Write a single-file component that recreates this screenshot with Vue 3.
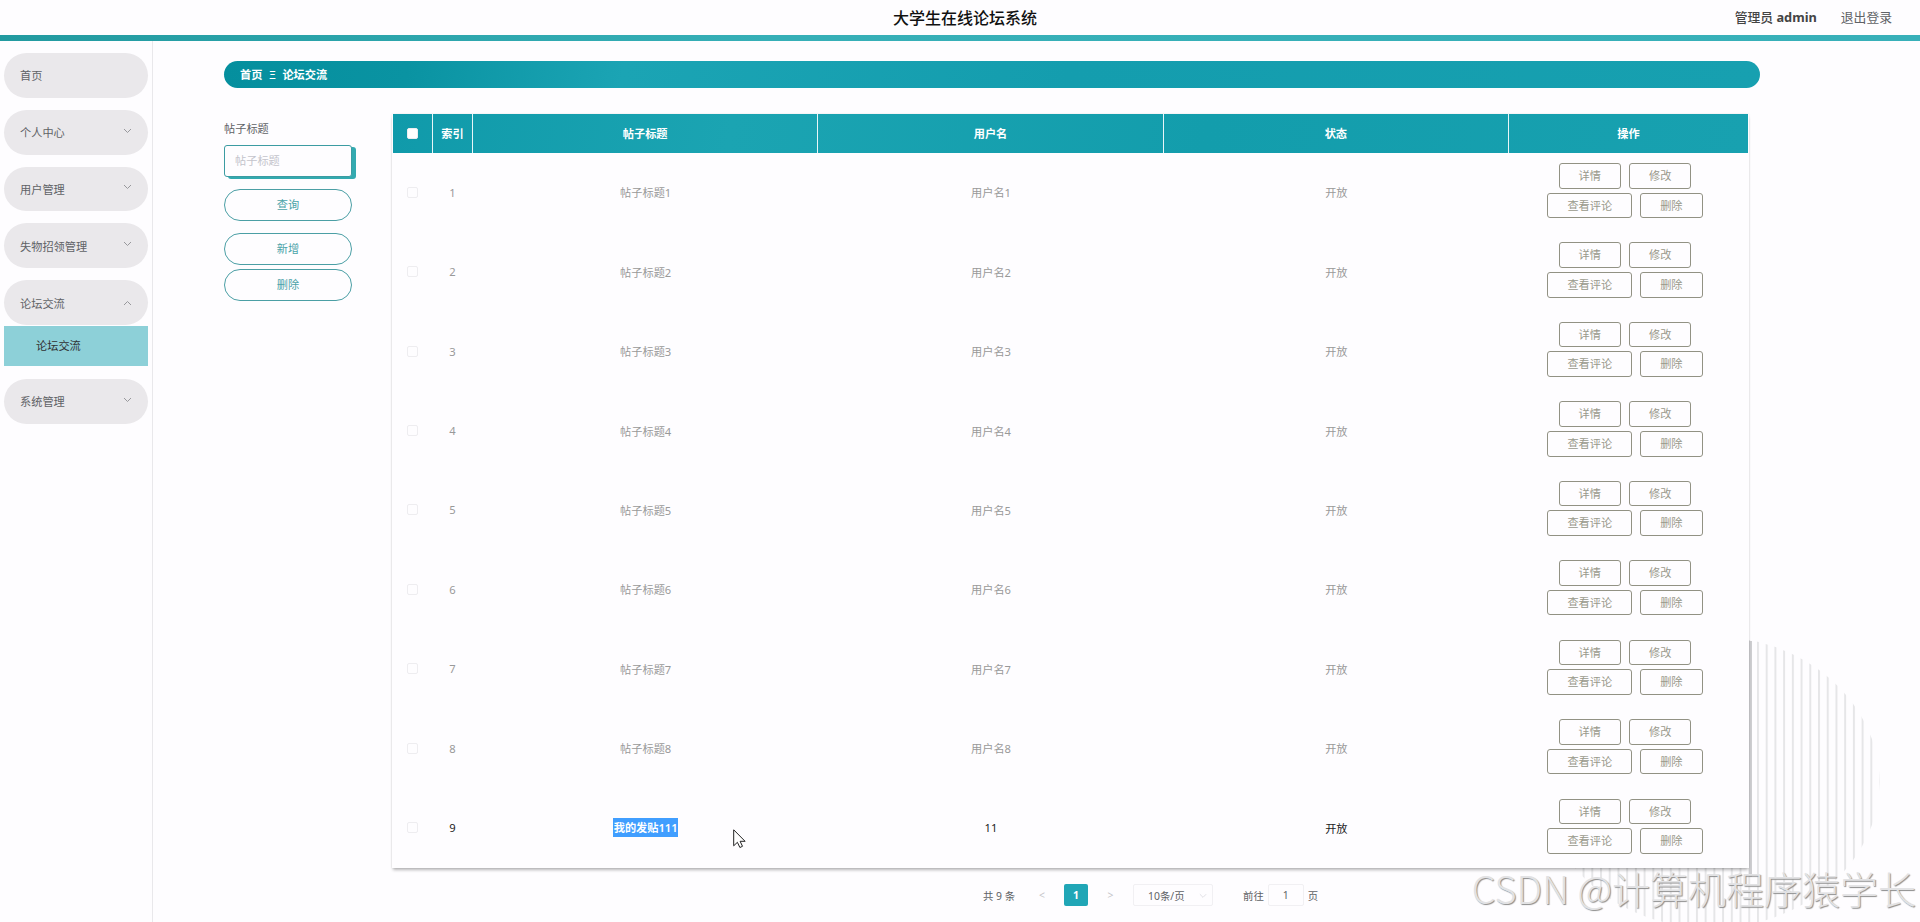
<template>
  <div class="layout">
    <header class="header">
      <div class="title">大学生在线论坛系统</div>
      <div class="user">管理员 <b>admin</b></div>
      <div class="logout">退出登录</div>
    </header>

    <div class="container">
      <aside class="sidebar">
        <div v-for="menu in menus" :key="menu.name" class="menu">
          <div class="menu-title">
            <span>{{ menu.name }}</span>
            <svg v-if="menu.arrow" :class="['arrow', menu.children && 'open']" viewBox="0 0 9 6">
              <path d="M1 1l3.5 3.5L8 1" />
            </svg>
          </div>
          <div v-for="child in menu.children" :key="child" class="menu-child">{{ child }}</div>
        </div>
      </aside>

      <svg class="decoration" width="340" height="294" viewBox="0 0 340 294">
        <defs>
          <pattern id="stripes" x="6.7" width="8.72" height="10" patternUnits="userSpaceOnUse">
            <rect width="2" height="10" fill="#e6e6e8" />
          </pattern>
        </defs>
        <ellipse cx="170" cy="147" rx="168.5" ry="146" fill="url(#stripes)" />
        <rect x="208" y="6" width="3" height="236" fill="#cdcdd0" />
      </svg>

      <main class="main">
        <div class="breadcrumb">
          <span>首页</span>
          <span class="separator">Ξ</span>
          <span>论坛交流</span>
        </div>

        <div class="content">
          <div class="filter">
            <label>帖子标题</label>
            <div class="input">帖子标题</div>
            <div class="pill search">查询</div>
            <div class="pill">新增</div>
            <div class="pill">删除</div>
          </div>

          <div class="list">
            <div class="table">
              <div class="row head">
                <div class="cell small"><i class="checkbox"></i></div>
                <div class="cell small">索引</div>
                <div class="cell">帖子标题</div>
                <div class="cell">用户名</div>
                <div class="cell">状态</div>
                <div class="cell actions">操作</div>
              </div>
              <div v-for="(row, i) in rows" :key="i" :class="['row', row.active && 'active']">
                <div class="cell small"><i class="checkbox"></i></div>
                <div class="cell small">{{ i + 1 }}</div>
                <div class="cell"><span :class="{ selected: row.active }">{{ row.title }}</span></div>
                <div class="cell">{{ row.user }}</div>
                <div class="cell">开放</div>
                <div class="cell actions">
                  <div class="buttons">
                    <span class="btn">详情</span>
                    <span class="btn">修改</span>
                  </div>
                  <div class="buttons">
                    <span class="btn">查看评论</span>
                    <span class="btn">删除</span>
                  </div>
                </div>
              </div>
            </div>

            <div class="pagination">
              <span class="total">共 9 条</span>
              <span class="nav prev">&lt;</span>
              <span class="page">1</span>
              <span class="nav next">&gt;</span>
              <span class="size">
                10条/页
                <svg class="arrow" viewBox="0 0 9 6"><path d="M1 1l3.5 3.5L8 1" /></svg>
              </span>
              <span>前往</span>
              <span class="jump">1</span>
              <span>页</span>
            </div>
          </div>
        </div>
      </main>
    </div>

    <svg class="cursor" width="13" height="20" viewBox="0 0 13 20">
      <path d="M.7.8v16l3.7-3.5 2.5 5.2 2.6-1.2-2.4-5h5z" />
    </svg>
    <div class="watermark">CSDN @计算机程序猿学长</div>
  </div>
</template>

<script setup>
const menus = [
  { name: '首页' },
  { name: '个人中心', arrow: true },
  { name: '用户管理', arrow: true },
  { name: '失物招领管理', arrow: true },
  { name: '论坛交流', arrow: true, children: ['论坛交流'] },
  { name: '系统管理', arrow: true },
]

const rows = Array.from({ length: 8 }, (_, i) => ({
  title: `帖子标题${i + 1}`,
  user: `用户名${i + 1}`,
}))
rows.push({ title: '我的发贴111', user: '11', active: true })
</script>

<style>
body {
  background: #fefdff;
  overflow: hidden;
}
</style>

<style scoped>
.layout {
  position: relative;
  height: 922px;
  overflow: hidden;
  box-sizing: border-box;
  font-family: "Noto Sans", "Noto Sans CJK SC", sans-serif;
  font-size: 11.2px;
  color: #606266;
}
.layout * {
  box-sizing: border-box;
}

.header {
  display: flex;
  align-items: center;
  height: 41px;
  padding: 0 28px 8px 893px;
  background: linear-gradient(90deg, #229aa0, #36afb7 40%, #38b0b9) bottom / 100% 6px no-repeat;
  white-space: nowrap;
}
.title {
  flex: 1;
  font-size: 16px;
  font-weight: 500;
  color: #111;
}
.user {
  margin-right: 24px;
  font-size: 12.8px;
  font-weight: 500;
  color: #444;
}
.logout {
  font-size: 12.8px;
}

.container {
  position: relative;
  display: flex;
  height: 881px;
}
.sidebar {
  width: 153px;
  padding: 12px 4px 0;
  border-right: 1px solid #e9e8eb;
}
.menu {
  margin-bottom: 12px;
}
.menu-title {
  display: flex;
  align-items: center;
  justify-content: space-between;
  height: 44.8px;
  padding: 0 16px;
  border-radius: 23px;
  background: #eae8eb;
}
.arrow {
  width: 9px;
  height: 6px;
  margin-top: -3px;
  fill: none;
  stroke: #98989c;
}
.arrow.open {
  transform: rotate(180deg);
  margin-top: 0;
}
.menu-child {
  height: 40px;
  margin: 1px 0 13px;
  padding-left: 32px;
  line-height: 40px;
  color: #303133;
  background: #8dd0d8;
}

.decoration {
  position: absolute;
  left: 1541px;
  top: 594px;
}

.main {
  position: relative;
  flex: 1;
  padding: 20px 160px 0 71px;
}
.breadcrumb {
  display: flex;
  align-items: center;
  height: 27px;
  padding: 0 0 1px 16px;
  border-radius: 14px;
  color: #fff;
  font-weight: bold;
  background: linear-gradient(100deg, #058f9e, #0a93a2 12%, #1ba4b4 26%, #149dae 55%, #17a0b0);
}
.separator {
  margin: 0 6.5px;
  font-weight: normal;
}

.content {
  display: flex;
  margin-top: 26px;
}
.filter {
  width: 128px;
  margin-right: 40px;
}
.filter label {
  display: block;
  height: 31px;
  line-height: 30px;
}
.input {
  height: 32px;
  padding-left: 10px;
  border: 1px solid #3c9ca2;
  border-radius: 3px;
  line-height: 30px;
  color: #c4c4cc;
  background: #fefdff;
  box-shadow: 4px 2px 0 #33aab0;
}
.pill {
  height: 32px;
  margin-bottom: 4px;
  border: 1px solid #4b9fa5;
  border-radius: 16px;
  line-height: 30px;
  text-align: center;
  color: #4ba3a8;
}
.pill.search {
  margin: 12px 0;
}

.list {
  width: 1357px;
}
.table {
  height: 754px;
  padding: 0 1px;
  background: #fefdff;
  box-shadow: 0 3px 3px -1px rgba(0, 0, 0, .28), 0 0 2px rgba(0, 0, 0, .1);
}
.row {
  display: flex;
  height: 79.44px;
  color: #999;
}
.row.active {
  color: #222;
}
.row.head {
  height: 39px;
  color: #fff;
  font-weight: bold;
  background: linear-gradient(100deg, #109aaa, #1ba4b2 25%, #139dac 60%, #18a1b0);
}
.cell {
  flex: 1;
  display: flex;
  align-items: center;
  justify-content: center;
  padding-bottom: 1px;
}
.cell.small {
  flex: none;
  width: 40px;
  padding-right: 1px;
}
.cell.actions {
  flex: none;
  width: 239px;
}
.head .cell {
  border-right: 1px solid #e8f6f8;
}
.head .cell.small {
  padding-right: 0;
}
.head .cell:last-child {
  border-right: 0;
}
.row:not(.head) .actions {
  flex-direction: column;
  justify-content: flex-start;
  gap: 4px;
  padding: 10px 7px 0 0;
}
.buttons {
  display: flex;
  gap: 8px;
}
.btn {
  height: 25.6px;
  padding: 0 19px;
  border: 1px solid #929284;
  border-radius: 3px;
  line-height: 23.6px;
  color: #99998b;
}
.checkbox {
  width: 11px;
  height: 11px;
  border: 1px solid #eeedf0;
  border-radius: 2px;
}
.head .checkbox {
  background: #fff;
}
.selected {
  height: 19px;
  padding: 0 .5px;
  line-height: 19px;
  font-weight: 600;
  color: #fff;
  background: #409eff;
}

.pagination {
  display: flex;
  align-items: center;
  height: 22px;
  margin-top: 16px;
  padding-left: 591px;
  font-size: 10.4px;
  white-space: nowrap;
}
.total {
  width: 46px;
}
.nav {
  color: #c4c4c8;
}
.nav.prev {
  width: 35px;
  padding-left: 10px;
}
.nav.next {
  width: 45px;
  text-align: center;
}
.page {
  width: 24px;
  height: 22px;
  border-radius: 2px;
  line-height: 22px;
  text-align: center;
  font-weight: bold;
  color: #fff;
  background: #20a6b6;
}
.size {
  display: flex;
  align-items: center;
  justify-content: space-between;
  width: 80px;
  height: 22px;
  margin-right: 30px;
  padding: 0 5px 0 14px;
  border: 1px solid #f1f0f3;
  border-radius: 2px;
}
.size .arrow {
  width: 8px;
  margin-top: 2px;
  stroke: #dcdce2;
}
.jump {
  width: 36px;
  height: 22px;
  margin: 0 4px;
  border: 1px solid #f1f0f3;
  border-radius: 2px;
  line-height: 20px;
  text-align: center;
}

.cursor {
  position: absolute;
  left: 733px;
  top: 829px;
  fill: #fff;
  stroke: #222;
}
.watermark {
  position: absolute;
  right: 4px;
  bottom: 5px;
  font-family: "Noto Sans CJK SC", sans-serif;
  font-size: 38px;
  font-weight: 300;
  line-height: 58px;
  white-space: nowrap;
  color: #e2e2e4;
  text-shadow: 1px 1px 1px #8c8c8c;
}
</style>
